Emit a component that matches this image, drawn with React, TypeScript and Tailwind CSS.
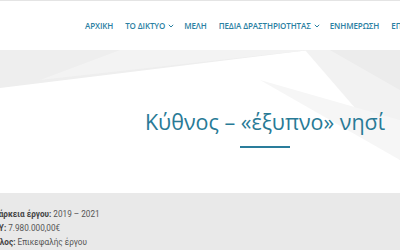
const navItems = [
  { label: "ΑΡΧΙΚΗ", caret: false },
  { label: "ΤΟ ΔΙΚΤΥΟ", caret: true },
  { label: "ΜΕΛΗ", caret: false },
  { label: "ΠΕΔΙΑ ΔΡΑΣΤΗΡΙΟΤΗΤΑΣ", caret: true },
  { label: "ΕΝΗΜΕΡΩΣΗ", caret: false },
  { label: "ΕΠΙΚΟΙΝΩΝΙΑ", caret: false },
];

const details = [
  { label: "Διάρκεια έργου:", value: "2019 – 2021" },
  { label: "Π/Υ:", value: "7.980.000,00€" },
  { label: "Ρόλος:", value: "Επικεφαλής έργου" },
];

const Caret = () => (
  <svg width="6" height="4" viewBox="0 0 6 4" className="ml-[3px] mr-[-2px] mt-[1px]">
    <path d="M0.8 0.8 L3 3 L5.2 0.8" fill="none" stroke="currentColor" strokeWidth="1" />
  </svg>
);

const App = () => {
  return (
    <div className="w-[400px] h-[250px] overflow-hidden bg-white flex flex-col font-['Open_Sans',sans-serif]">
      <div className="h-[1px] bg-[#e4e4e4]" />
      <header className="h-[49px] flex items-center whitespace-nowrap">
        <nav className="ml-[85px] flex items-center gap-[12px] text-[8px] font-semibold tracking-[-0.1px] text-[#2a80a2]">
          {navItems.map((item) => (
            <span key={item.label} className="flex items-center">
              {item.label}
              {item.caret && <Caret />}
            </span>
          ))}
        </nav>
      </header>

      <section className="relative h-[143px]">
        <svg className="absolute inset-0" width="400" height="143" viewBox="0 0 400 143">
          <polygon points="0,0 310,0 0,38" fill="#eeeeee" />
          <polygon points="120,0 310,0 40,30" fill="#f3f3f3" />
          <polygon points="305,0 400,0 400,110" fill="#f2f2f2" />
          <polygon points="330,0 400,40 400,0" fill="#ececec" />
          <polygon points="260,30 400,110 400,70" fill="#f6f6f6" />
        </svg>
        <div className="relative ml-[130px] w-[270px] flex flex-col items-center pt-[58px]">
          <h1 className="text-[21.5px] leading-[28px] text-[#287a96] whitespace-nowrap">
            Κύθνος – «έξυπνο» νησί
          </h1>
          <div className="mt-[10px] w-[50px] h-[1.5px] bg-[#2a7d9b]" />
        </div>
      </section>

      <section className="flex-1 bg-[#e9e9e9] pt-[15px] font-['Roboto',sans-serif] text-[8.2px] leading-[13.8px] text-[#555] whitespace-nowrap">
        <div className="ml-[-10px]">
          {details.map((d) => (
            <div key={d.label}>
              <span className="font-bold text-[#444]">{d.label}</span> {d.value}
            </div>
          ))}
        </div>
      </section>
    </div>
  );
};

export default App;
